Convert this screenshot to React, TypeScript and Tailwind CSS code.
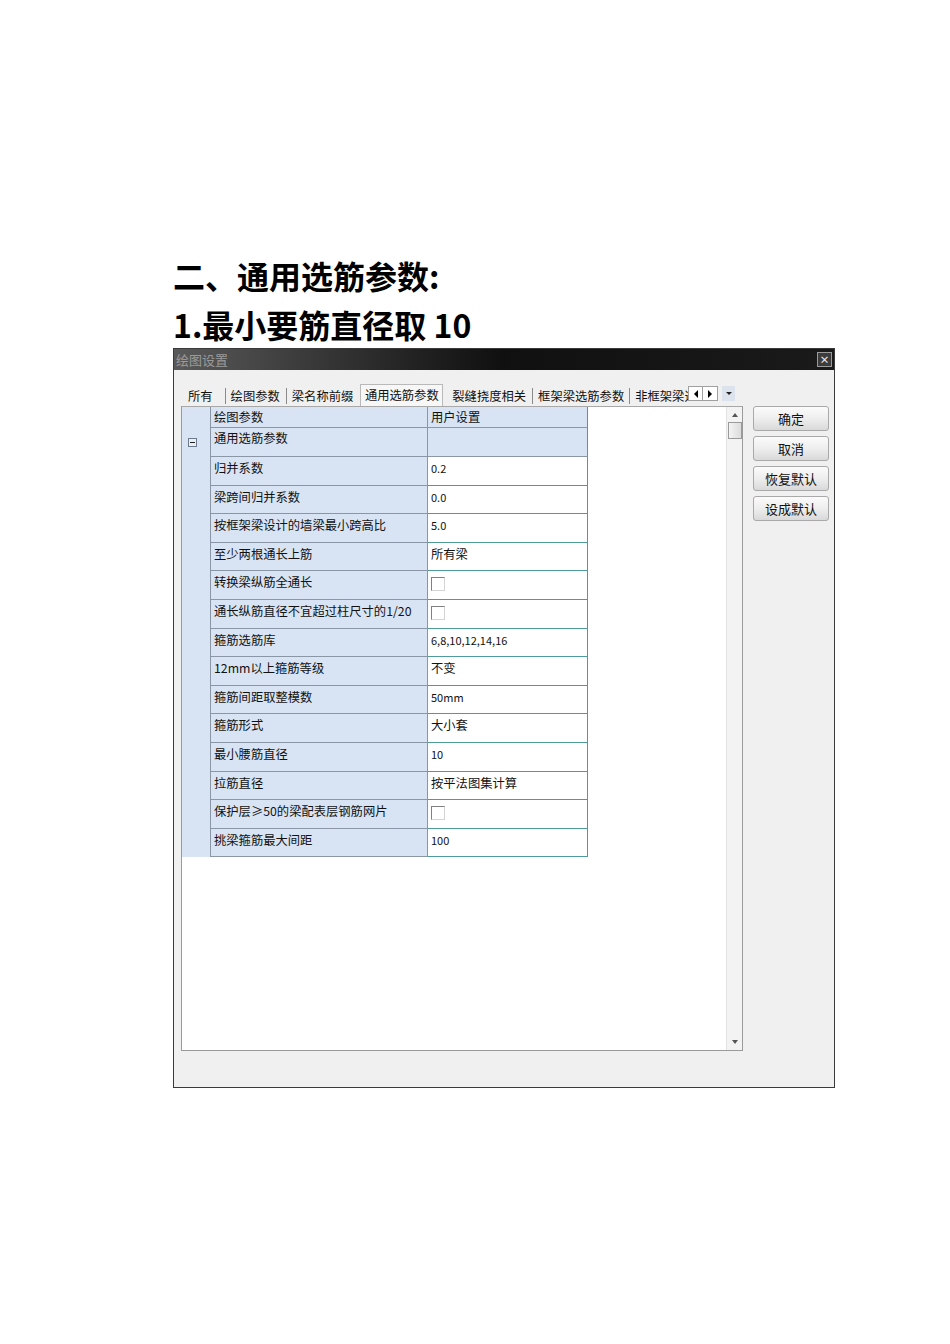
import React from "react";

const CJK = { fontFamily: '"Noto Sans CJK SC", "Noto Sans", sans-serif' };

type Row = { name: string; value?: string; check?: boolean; small?: boolean };

const rows: Row[] = [
  { name: "归并系数", value: "0.2", small: true },
  { name: "梁跨间归并系数", value: "0.0", small: true },
  { name: "按框架梁设计的墙梁最小跨高比", value: "5.0", small: true },
  { name: "至少两根通长上筋", value: "所有梁" },
  { name: "转换梁纵筋全通长", check: true },
  { name: "通长纵筋直径不宜超过柱尺寸的1/20", check: true },
  { name: "箍筋选筋库", value: "6,8,10,12,14,16", small: true },
  { name: "12mm以上箍筋等级", value: "不变" },
  { name: "箍筋间距取整模数", value: "50mm", small: true },
  { name: "箍筋形式", value: "大小套" },
  { name: "最小腰筋直径", value: "10", small: true },
  { name: "拉筋直径", value: "按平法图集计算" },
  { name: "保护层≥50的梁配表层钢筋网片", check: true },
  { name: "挑梁箍筋最大间距", value: "100", small: true },
];

function Checkbox() {
  return (
    <div className="mt-[3px] h-[14px] w-[14px] border border-t-[#808080] border-l-[#808080] border-r-[#d4d4d4] border-b-[#d4d4d4] bg-white" />
  );
}

function Btn({ label }: { label: string }) {
  return (
    <div className="flex h-[25px] w-[76px] items-center justify-center rounded-[3px] border border-[#a9a9a9] bg-gradient-to-b from-[#fbfbfb] via-[#eeeeee] to-[#d9d9d9] text-[13px] text-[#111]">
      {label}
    </div>
  );
}

function Sep() {
  return <div className="mb-[2px] h-[16px] w-px shrink-0 bg-[#8a8a8a]" />;
}

export default function App() {
  return (
    <div className="min-h-[1344px] w-[950px] bg-white" style={CJK}>
      <div className="pl-[173px] pt-[250px]">
        <div className="text-[32px] font-bold leading-[50px] text-black">二、通用选筋参数:</div>
        <div className="text-[32px] font-bold leading-[48px] text-black">1.最小要筋直径取 10</div>

        {/* Dialog */}
        <div className="flex h-[740px] w-[662px] flex-col border border-[#3a3a3a] bg-[#f0f0f0]">
          {/* Title bar */}
          <div className="flex h-[21px] items-center justify-between bg-gradient-to-r from-[#5a5a5a] via-[#101010] to-[#1a1a1a] pl-[2px] pr-[2px]">
            <span className="text-[13px] leading-none text-[#9a9a9a]">绘图设置</span>
            <div className="flex h-[15px] w-[15px] items-center justify-center border border-[#9a9a9a] bg-[#3c3c3c] text-[10px] font-bold leading-none text-[#e8e8e8]">
              ×
            </div>
          </div>

          {/* Body */}
          <div className="flex flex-1 flex-col pl-[7px] pr-[3px] pt-[14px]">
            {/* Tabs row */}
            <div className="flex h-[22px] items-end whitespace-nowrap text-[12.3px] leading-none text-[#111]">
              <div className="flex h-[20px] shrink-0 items-center pl-[7px] pr-[12px]">所有</div>
              <Sep />
              <div className="flex h-[20px] shrink-0 items-center pl-[5px] pr-[6px]">绘图参数</div>
              <Sep />
              <div className="flex h-[20px] shrink-0 items-center pl-[5px] pr-[7px]">梁名称前缀</div>
              <div className="relative z-10 flex h-[22px] w-[83px] shrink-0 items-center justify-center border border-b-0 border-[#b9b9b9] bg-[#f7f7f7]">
                通用选筋参数
              </div>
              <div className="flex h-[20px] shrink-0 items-center pl-[9px] pr-[6px]">裂缝挠度相关</div>
              <Sep />
              <div className="flex h-[20px] shrink-0 items-center px-[5px]">框架梁选筋参数</div>
              <Sep />
              <div className="flex h-[20px] w-[58px] shrink-0 items-center overflow-hidden pl-[5px]">非框架梁选</div>
              <div className="mb-[5px] flex h-[15px] shrink-0 items-stretch">
                <div className="flex w-[15px] items-center justify-center border border-[#a0a0a0] bg-white">
                  <div className="h-0 w-0 border-y-[4px] border-r-[4px] border-y-transparent border-r-black" />
                </div>
                <div className="flex w-[15px] items-center justify-center border border-l-0 border-[#a0a0a0] bg-white">
                  <div className="h-0 w-0 border-y-[4px] border-l-[4px] border-y-transparent border-l-black" />
                </div>
              </div>
              <div className="mb-[5px] ml-[4px] flex h-[15px] w-[13px] shrink-0 items-center justify-center bg-[#dde3ec]">
                <div className="h-0 w-0 border-x-[3px] border-t-[3px] border-x-transparent border-t-[#222]" />
              </div>
            </div>

            <div className="flex">
              {/* Grid panel */}
              <div className="flex h-[645px] w-[562px] shrink-0 border border-[#9a9a9a] border-t-[#a8a8a8] bg-white">
                <div className="flex flex-1 self-start">
                  {/* Gutter */}
                  <div className="w-[29px] self-stretch border-r border-[#8a96a6] bg-[#d8e4f4]">
                    <div className="h-[21px]" />
                    <div className="flex h-[29px] items-center pl-[6px]">
                      <div className="flex h-[9px] w-[9px] items-center justify-center border border-[#6c7a8c] bg-[#e8eef6]">
                        <div className="h-px w-[5px] bg-[#222]" />
                      </div>
                    </div>
                  </div>
                  <div className="w-[377px] text-[12.3px] leading-[16px] text-[#111]">
                    {/* Header */}
                    <div className="flex h-[21px]">
                      <div className="flex w-[217px] items-center border-b border-r border-[#8a96a6] bg-[#d8e4f4] pl-[3px]">绘图参数</div>
                      <div className="flex w-[160px] items-center border-b border-r border-[#8a96a6] border-r-[#4f9a9a] bg-[#d8e4f4] pl-[3px]">用户设置</div>
                    </div>
                    {/* Group row */}
                    <div className="flex h-[29px]">
                      <div className="w-[217px] border-b border-r border-[#8a96a6] bg-[#d8e4f4] pl-[3px] pt-[2px]">通用选筋参数</div>
                      <div className="w-[160px] border-b border-r border-[#8a96a6] border-r-[#4f9a9a] bg-[#d8e4f4]" />
                    </div>
                    {rows.map((r) => (
                      <div key={r.name} className="flex h-[28.6px]">
                        <div className="w-[217px] border-b border-r border-[#8a96a6] bg-[#d8e4f4] pl-[3px] pt-[3px]">
                          {r.name}
                        </div>
                        <div className="w-[160px] border-b border-r border-[#4f9a9a] bg-white pl-[3px] pt-[3px]">
                          {r.check ? (
                            <Checkbox />
                          ) : (
                            <span className={r.small ? "text-[11px]" : ""}>{r.value}</span>
                          )}
                        </div>
                      </div>
                    ))}
                  </div>
                </div>
                {/* Scrollbar */}
                <div className="flex w-[16px] flex-col items-center border-l border-[#e2e2e2] bg-[#f3f3f3]">
                  <div className="mt-[6px] h-0 w-0 border-x-[3px] border-b-[4px] border-x-transparent border-b-[#555]" />
                  <div className="mt-[5px] h-[17px] w-[14px] border border-[#9a9a9a] bg-gradient-to-r from-[#f4f4f4] to-[#dcdcdc]" />
                  <div className="flex-1" />
                  <div className="mb-[6px] h-0 w-0 border-x-[3px] border-t-[4px] border-x-transparent border-t-[#555]" />
                </div>
              </div>

              {/* Buttons */}
              <div className="ml-[10px] flex shrink-0 flex-col gap-[5px]">
                <Btn label="确定" />
                <Btn label="取消" />
                <Btn label="恢复默认" />
                <Btn label="设成默认" />
              </div>
            </div>
          </div>
        </div>
      </div>
    </div>
  );
}
